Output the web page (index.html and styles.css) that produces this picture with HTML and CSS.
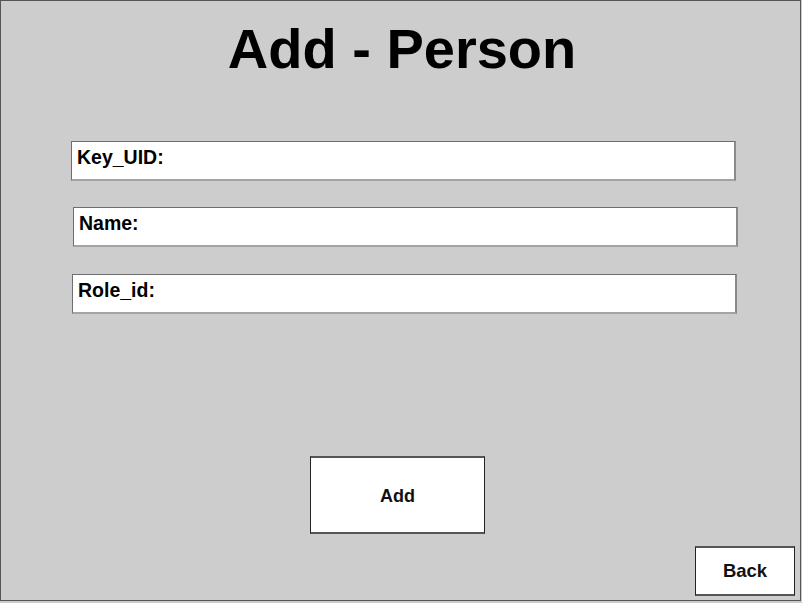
FILE: index.html
```html
<!DOCTYPE html>
<html>
<head>
<meta charset="utf-8">
<link rel="stylesheet" href="styles.css">
</head>
<body>
<div class="frame">
  <h1 class="title">Add - Person</h1>
  <div class="fields">
    <div class="field field-key"><span class="label">Key_UID:</span></div>
    <div class="field field-name"><span class="label">Name:</span></div>
    <div class="field field-role"><span class="label">Role_id:</span></div>
  </div>
  <div class="add-row">
    <button class="btn btn-add">Add</button>
  </div>
  <div class="back-row">
    <button class="btn btn-back">Back</button>
  </div>
</div>
</body>
</html>
```
FILE: styles.css
```css
html, body {
  margin: 0;
  padding: 0;
  background: #cccccc;
}
body {
  font-family: "Liberation Sans", Arial, sans-serif;
  color: #000;
}
.frame {
  box-sizing: border-box;
  width: 801px;
  height: 601px;
  border: 1px solid #555555;
  background: #cdcdcd;
  display: flex;
  flex-direction: column;
  padding-top: 16px;
}
.title {
  margin: 0;
  font-size: 56px;
  line-height: 64px;
  font-weight: bold;
  text-align: center;
  padding-left: 3px;
}
.fields {
  display: flex;
  flex-direction: column;
  gap: 26px;
  margin-top: 60px;
}
.field {
  box-sizing: border-box;
  width: 665px;
  height: 40px;
  background: #ffffff;
  border: 1px solid #6e6e6e;
  border-bottom: 2px solid #a3a3a3;
  border-right: 2px solid #8a8a8a;
  padding: 4px 0 0 5px;
}
.field-key { margin-left: 70px; }
.field-name { margin-left: 72px; }
.field-role { margin-left: 71px; margin-top: 1px; }
.label {
  font-size: 19.5px;
  font-weight: bold;
  line-height: 22px;
}
.add-row {
  display: flex;
  margin-top: 142px;
  padding-left: 309px;
}
.btn {
  box-sizing: border-box;
  background: #ffffff;
  font-family: "Liberation Sans", Arial, sans-serif;
  font-size: 18px;
  font-weight: bold;
  color: #111;
  padding: 0;
  border-left: 1px solid #222;
  border-right: 1px solid #222;
  border-top: 2px solid #555;
  border-bottom: 2px solid #555;
}
.btn-add {
  width: 175px;
  height: 78px;
  padding-top: 2px;
}
.back-row {
  display: flex;
  justify-content: flex-end;
  margin-top: auto;
  padding: 0 5px 4px 0;
}
.btn-back {
  width: 100px;
  height: 50px;
  font-size: 18.5px;
}
```
